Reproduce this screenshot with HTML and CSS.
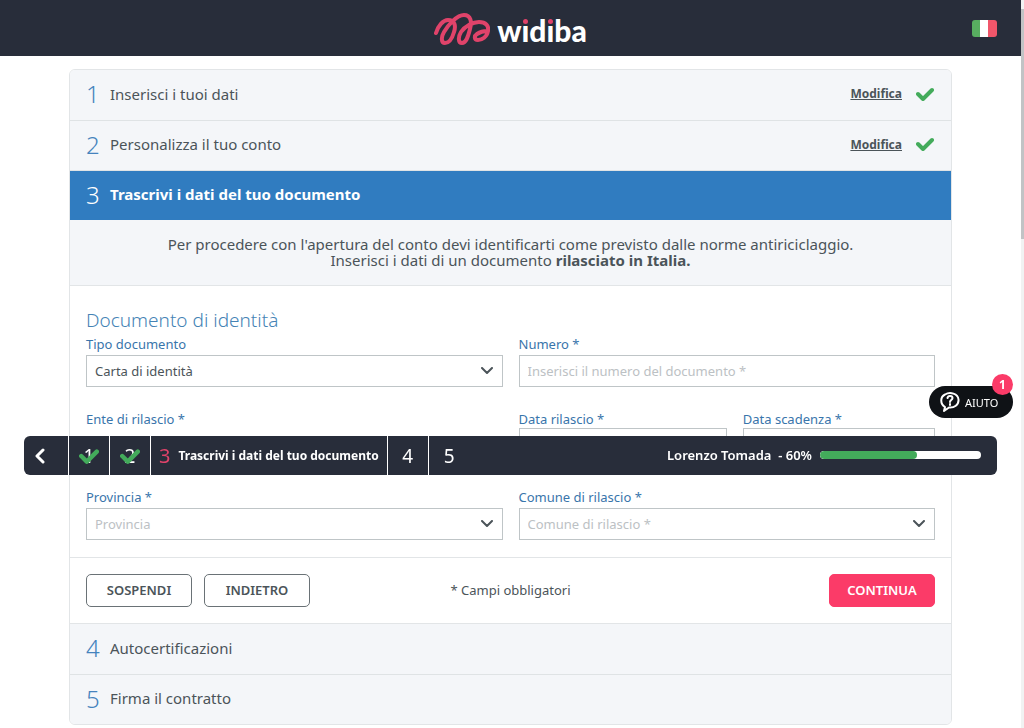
FILE: index.html
```html
<!DOCTYPE html>
<html lang="it">
<head>
  <meta charset="UTF-8">
  <meta name="viewport" content="width=device-width, initial-scale=1.0">
  <title>Widiba</title>
  <link rel="stylesheet" href="styles.css">
</head>
<body>
  <header class="header">
    <a class="logo" href="#">
      <svg class="logo-mark" viewBox="4 3 56 33" width="56" height="33" aria-hidden="true">
        <path d="M6 24C8 17 13 11 18 11C25 11 26 17 24 23C22 30 19 34 15 34C11 34 11 28 14 23C18 16 27 6 34 6C41 6 42 13 40 20C38 28 36 34 32 34C28 34 28 28 31 23C35 17 43 13 49 13C56 13 59 17 58 22C57 28 52 31 48 31C44 31 44 27 47 25C50 23 54 22 57 22"/>
      </svg>
      <span class="logo-text">w<span class="dot-i">ı</span>d<span class="dot-i">ı</span>ba</span>
    </a>
    <button class="lang" type="button" aria-label="Italiano"><span class="flag"></span></button>
  </header>

  <main class="card">
    <section class="step">
      <span class="step-num">1</span>
      <span class="step-title">Inserisci i tuoi dati</span>
      <a class="edit" href="#">Modifica</a>
      <svg class="check" viewBox="0 0 18 14" width="18" height="14"><path d="M2 7l5 5 9-9"/></svg>
    </section>
    <section class="step">
      <span class="step-num">2</span>
      <span class="step-title">Personalizza il tuo conto</span>
      <a class="edit" href="#">Modifica</a>
      <svg class="check" viewBox="0 0 18 14" width="18" height="14"><path d="M2 7l5 5 9-9"/></svg>
    </section>
    <section class="step active">
      <span class="step-num">3</span>
      <span class="step-title">Trascrivi i dati del tuo documento</span>
    </section>

    <p class="intro">Per procedere con l'apertura del conto devi identificarti come previsto dalle norme antiriciclaggio.<br>Inserisci i dati di un documento <b>rilasciato in Italia.</b></p>

    <form>
      <div class="fields">
        <div class="field">
          <h2>Documento di identità</h2>
          <label for="tipo">Tipo documento</label>
          <div class="select">
            <select id="tipo"><option>Carta di identità</option></select>
            <svg viewBox="0 0 12 8" width="12" height="8"><path d="M1 1l5 5 5-5"/></svg>
          </div>
        </div>
        <div class="field">
          <label for="numero">Numero *</label>
          <input id="numero" type="text" placeholder="Inserisci il numero del documento *">
        </div>
        <div class="field ente">
          <label for="ente">Ente di rilascio *</label>
          <div class="select">
            <select id="ente"></select>
          </div>
        </div>
        <div class="dates">
          <div class="field">
            <label for="rilascio">Data rilascio *</label>
            <input id="rilascio" type="text">
          </div>
          <div class="field">
            <label for="scadenza">Data scadenza *</label>
            <input id="scadenza" type="text">
          </div>
        </div>
        <div class="field">
          <label for="provincia">Provincia *</label>
          <div class="select">
            <select id="provincia" class="empty"><option>Provincia</option></select>
            <svg viewBox="0 0 12 8" width="12" height="8"><path d="M1 1l5 5 5-5"/></svg>
          </div>
        </div>
        <div class="field">
          <label for="comune">Comune di rilascio *</label>
          <div class="select">
            <select id="comune" class="empty"><option>Comune di rilascio *</option></select>
            <svg viewBox="0 0 12 8" width="12" height="8"><path d="M1 1l5 5 5-5"/></svg>
          </div>
        </div>
      </div>
      <div class="actions">
        <div class="actions-left">
          <button class="btn" type="button">SOSPENDI</button>
          <button class="btn" type="button">INDIETRO</button>
        </div>
        <span class="required">* Campi obbligatori</span>
        <button class="btn btn-primary" type="submit">CONTINUA</button>
      </div>
    </form>

    <section class="step">
      <span class="step-num">4</span>
      <span class="step-title">Autocertificazioni</span>
    </section>
    <section class="step">
      <span class="step-num">5</span>
      <span class="step-title">Firma il contratto</span>
    </section>
  </main>

  <!-- floating progress bar -->
  <nav class="bar">
    <button class="bar-item back" type="button" aria-label="Indietro">
      <svg viewBox="0 0 10 16" width="10" height="16"><path d="M8 2L2 8l6 6"/></svg>
    </button>
    <button class="bar-item done" type="button">1
      <svg class="check" viewBox="0 0 18 14" width="20" height="16"><path d="M2 7l5 5 9-9"/></svg>
    </button>
    <button class="bar-item done" type="button">2
      <svg class="check" viewBox="0 0 18 14" width="20" height="16"><path d="M2 7l5 5 9-9"/></svg>
    </button>
    <button class="bar-item current" type="button"><span class="current-num">3</span><b>Trascrivi i dati del tuo documento</b></button>
    <button class="bar-item" type="button">4</button>
    <button class="bar-item last" type="button">5</button>
    <div class="bar-user">
      <b>Lorenzo Tomada &nbsp;- 60%</b>
      <div class="progress"><div class="progress-fill" style="width:60%"></div></div>
    </div>
  </nav>

  <button class="help" type="button">
    <svg viewBox="0 0 20 20" width="20" height="20">
      <path d="M4 19l1-4C0 12 0 5 5 2.500c5-3 13-1 13.500 5C19 13 14 16 9 15.500z"/>
      <path d="M7.500 6c.5-3 5-2.500 5 0 0 2-2.500 2-2.500 4M10 12v1"/>
    </svg>
    AIUTO
    <span class="badge">1</span>
  </button>
  <div class="scroll"><div class="scroll-thumb"></div></div>
</body>
</html>
```
FILE: styles.css
```css
* {
  box-sizing: border-box;
}
body {
  margin: 0;
  padding-right: 3px;
  background: #fff;
  color: #4b5459;
  font-family: "Noto Sans", "Open Sans", sans-serif;
  font-size: 13px;
}
button, input, select {
  font: inherit;
  color: inherit;
}
button {
  cursor: pointer;
}
svg {
  fill: none;
  stroke-linecap: round;
  stroke-linejoin: round;
}

/* header */
.header {
  position: relative;
  display: flex;
  align-items: center;
  justify-content: center;
  height: 56px;
  background: #282d3a;
}
.logo {
  display: flex;
  align-items: center;
  gap: 7px;
  color: #fff;
  text-decoration: none;
}
.logo-mark {
  stroke: #e0436a;
  stroke-width: 4;
}
.logo-text {
  padding-top: 3px;
  font-family: Lato, sans-serif;
  font-size: 30px;
  font-weight: 900;
  line-height: 32px;
}
.dot-i {
  position: relative;
}
.dot-i::before {
  content: "";
  position: absolute;
  top: 7px;
  left: 2px;
  width: 5px;
  height: 5px;
  border-radius: 50%;
  background: #e0436a;
}
.lang {
  position: absolute;
  right: 24px;
  padding: 0;
  border: 0;
  background: none;
}
.flag {
  display: block;
  width: 25px;
  height: 17px;
  border-radius: 3px;
  background: linear-gradient(90deg, #58ae60 33%, #fff 33%, #fff 66%, #f0566a 66%);
}

/* steps */
.card {
  max-width: 883px;
  margin: 13px auto 3px;
  border: 1px solid #e2e5e7;
  border-radius: 6px;
  overflow: hidden;
}
.step {
  display: flex;
  align-items: center;
  height: 50px;
  padding: 0 17px 3px 16px;
  background: #f4f6f9;
}
.step + .step {
  border-top: 1px solid #dfe3e5;
}
.step.active {
  background: #307cc0;
  background-clip: padding-box;
  color: #fff;
}
.step-num {
  width: 24px;
  color: #4583bd;
  font-size: 24px;
  font-weight: 300;
}
.step-title {
  flex: 1;
  font-size: 15px;
}
.active .step-num {
  color: #fff;
}
.active .step-title {
  font-weight: bold;
}
.edit {
  margin-right: 14px;
  color: inherit;
  font-size: 12px;
  font-weight: bold;
}
.check {
  stroke: #43ab5b;
  stroke-width: 4;
}
.intro {
  margin: 0;
  padding: 16px 16px 17px;
  border-bottom: 1px solid #e2e5e7;
  background: #f4f6f9;
  font-size: 15px;
  line-height: 16px;
  text-align: center;
}

/* form */
.fields {
  display: grid;
  grid-template-columns: 1fr 1fr;
  align-items: end;
  gap: 23px 16px;
  padding: 23px 16px 17px;
}
h2 {
  margin: 0 0 4px;
  color: #4583b5;
  font-size: 19px;
  font-weight: 300;
  line-height: 22px;
}
.field label {
  display: block;
  margin-bottom: 2px;
  color: #3975ab;
  line-height: 18px;
}
.field input,
.field select {
  width: 100%;
  height: 32px;
  padding: 0 8px;
  border: 1px solid #bfc5c7;
  border-radius: 0;
  background: #fff;
  appearance: none;
}
.field input::placeholder {
  color: #bcc1c4;
}
.field select.empty {
  color: #bcc1c4;
}
.select {
  display: grid;
  align-items: center;
}
.select select,
.select svg {
  grid-area: 1 / 1;
}
.select svg {
  justify-self: end;
  margin-right: 10px;
  stroke: #4b5459;
  stroke-width: 2;
  pointer-events: none;
}
.dates {
  display: grid;
  grid-template-columns: 13fr 12fr;
  gap: 16px;
  align-self: start;
}
.dates label {
  margin-bottom: 0;
}
.ente label {
  margin-bottom: 8px;
}
.ente select {
  height: 29px;
}
.actions {
  display: grid;
  grid-template-columns: 1fr auto 1fr;
  align-items: center;
  padding: 16px;
  border-top: 1px solid #e2e5e7;
  border-bottom: 1px solid #e2e5e7;
}
.actions-left {
  display: flex;
  gap: 12px;
}
.required {
  padding-bottom: 2px;
}
.btn {
  width: 106px;
  height: 33px;
  padding: 0 0 2px;
  border: 1px solid #6a7276;
  border-radius: 5px;
  background: #fff;
  font-weight: 600;
}
.btn-primary {
  justify-self: end;
  border-color: #fb3b68;
  background: #fb3b68;
  color: #fff;
}

/* floating progress bar */
.bar {
  position: fixed;
  top: 436px;
  left: 24px;
  right: 27px;
  display: flex;
  height: 39px;
  border-radius: 6px;
  background: #282d3a;
  color: #fff;
}
.bar-item {
  display: flex;
  align-items: center;
  justify-content: center;
  width: 41px;
  padding: 0;
  border: 0;
  border-right: 1px solid #fff;
  background: none;
  font-size: 19px;
}
.back {
  width: 45px;
  padding-right: 12px;
}
.back svg {
  stroke: #fff;
  stroke-width: 3;
}
.done {
  position: relative;
}
.done .check {
  position: absolute;
  top: 12px;
  left: 10px;
}
.current {
  gap: 8px;
  width: auto;
  padding: 0 8px;
}
.current b {
  font-size: 12px;
}
.current-num {
  color: #e0436a;
  font-size: 20px;
}
.last {
  border-right: 0;
}
.bar-user {
  display: flex;
  align-items: center;
  gap: 8px;
  margin-left: auto;
  padding: 0 16px 2px 0;
}
.bar-user b {
  font-weight: 600;
}
.progress {
  width: 161px;
  height: 8px;
  border-radius: 4px;
  background: #fff;
  overflow: hidden;
}
.progress-fill {
  height: 100%;
  border-radius: 4px;
  background: #43ab5b;
}

/* help */
.help {
  position: fixed;
  top: 386px;
  right: 11px;
  display: flex;
  align-items: center;
  gap: 5px;
  width: 84px;
  height: 32px;
  padding: 0 0 0 11px;
  border: 0;
  border-radius: 16px;
  background: #0f1216;
  color: #fff;
  font-size: 11px;
}
.help svg {
  stroke: #fff;
  stroke-width: 2;
}
.badge {
  position: absolute;
  top: -12px;
  right: 0;
  width: 21px;
  height: 21px;
  border-radius: 50%;
  background: #fb3b68;
  font-size: 12px;
  font-weight: bold;
  line-height: 21px;
  text-align: center;
}

/* scroll track */
.scroll {
  position: fixed;
  top: 0;
  right: 0;
  bottom: 0;
  width: 3px;
  padding-top: 9px;
  background: #f1f2f2;
}
.scroll-thumb {
  height: 32%;
  background: #c1c3c5;
}
```
